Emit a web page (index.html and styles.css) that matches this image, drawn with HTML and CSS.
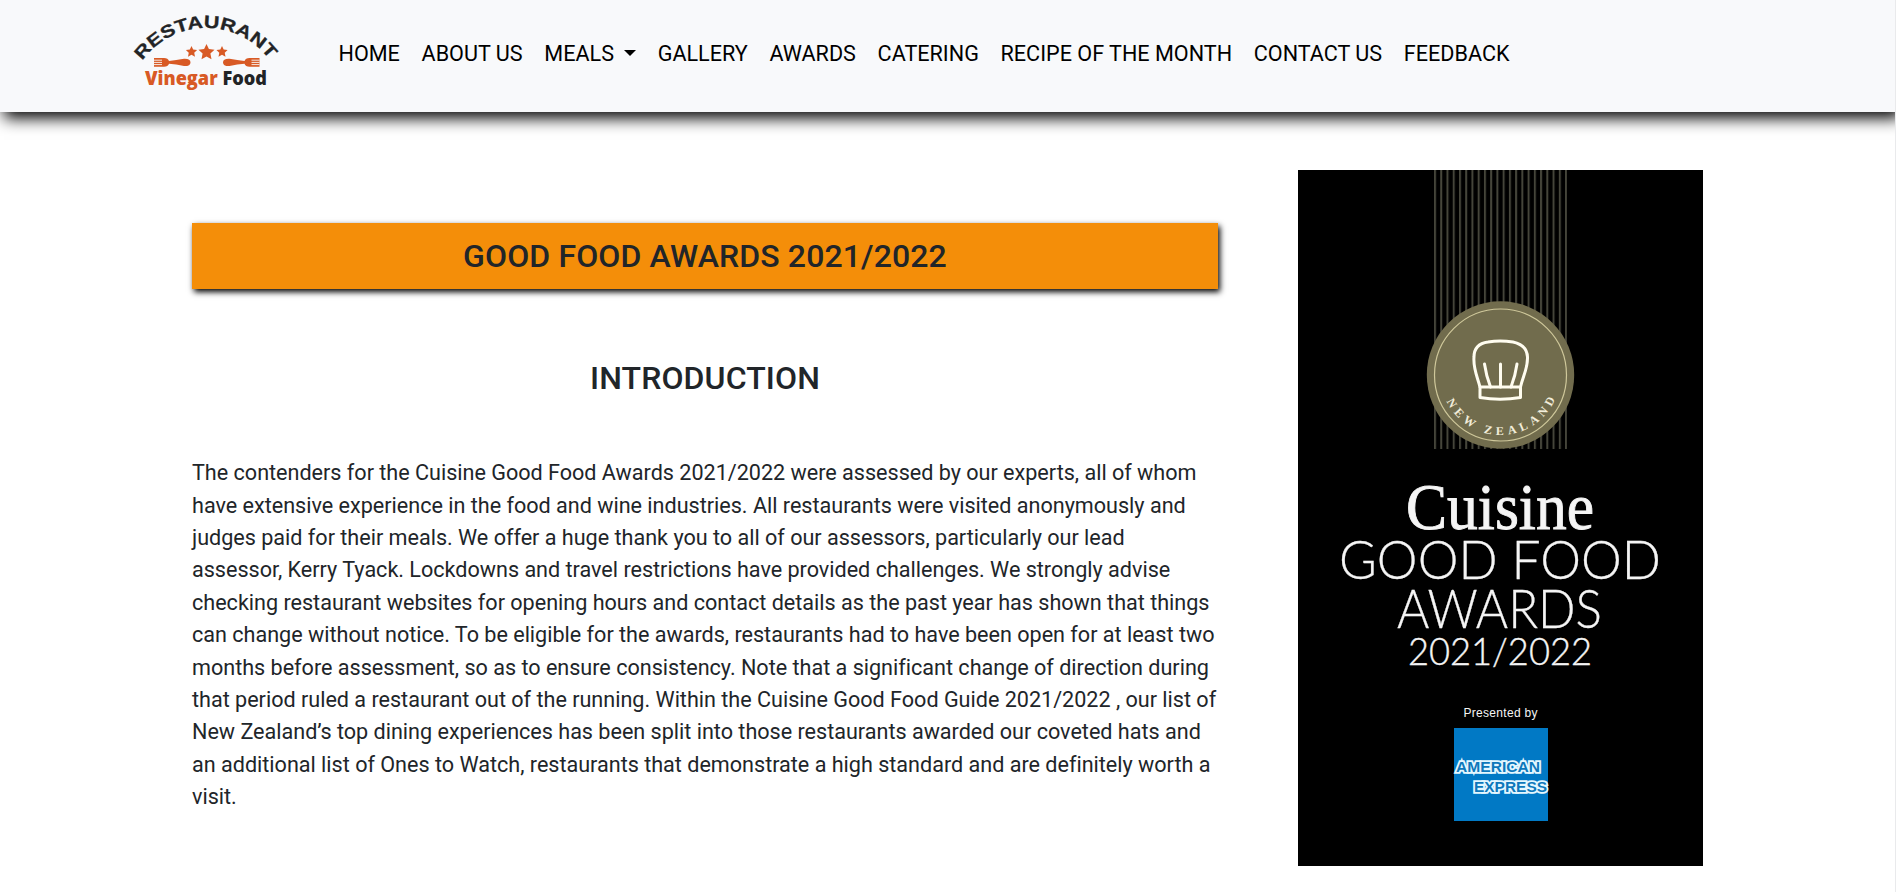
FILE: index.html
```html
<!DOCTYPE html>
<html lang="en">
<head>
<meta charset="utf-8">
<title>Restaurant Vinegar Food - Awards</title>
<link rel="stylesheet" href="styles.css">
</head>
<body>
<header class="navbar">
  <a class="brand" href="#" aria-label="Restaurant Vinegar Food">
    <svg class="logo" width="152" height="90" viewBox="0 0 152 90">
      <defs>
        <path id="arch" d="M12.500 50.500A78.500 78.500 0 0 1 140.500 51.500"/>
        <path id="star" d="M0-8.200 2.400-3.200 8-2.600 3.900 1.200 5 6.900 0 4.200-5 6.900-3.900 1.200-8-2.600-2.400-3.200Z"/>
        <g id="fork">
          <path d="M0 0H10Q14 0 15 3Q22 2.400 30 .8Q36.500 .5 36.500 4.400Q36.500 8.200 30 8Q22 6.300 15 5.800Q14 8.700 10 8.700H0Z"/>
          <path class="tines" d="M0 2.200H8M0 4.400H8M0 6.600H8"/>
        </g>
      </defs>
      <text class="logo-arch"><textPath href="#arch" textLength="147" lengthAdjust="spacingAndGlyphs">RESTAURANT</textPath></text>
      <g class="logo-orange">
        <use href="#star" x="76.500" y="42.300"/>
        <use href="#star" transform="translate(61.500 41.800) scale(.7)"/>
        <use href="#star" transform="translate(92 41.800) scale(.7)"/>
        <use href="#fork" x="24" y="48"/>
        <use href="#fork" transform="translate(129.500 48) scale(-1 1)"/>
      </g>
      <text class="logo-name" x="15" y="75" textLength="122" lengthAdjust="spacingAndGlyphs"><tspan class="logo-orange">Vinegar</tspan> Food</text>
    </svg>
  </a>
  <nav class="nav">
    <a href="#">HOME</a>
    <a href="#">ABOUT US</a>
    <a href="#" class="dropdown">MEALS</a>
    <a href="#">GALLERY</a>
    <a href="#">AWARDS</a>
    <a href="#">CATERING</a>
    <a href="#">RECIPE OF THE MONTH</a>
    <a href="#">CONTACT US</a>
    <a href="#">FEEDBACK</a>
  </nav>
</header>
<main class="content">
  <article class="article">
    <h2 class="banner">GOOD FOOD AWARDS 2021/2022</h2>
    <h2 class="subtitle">INTRODUCTION</h2>
    <p class="copy">The contenders for the Cuisine Good Food Awards 2021/2022 were assessed by our experts, all of whom have extensive experience in the food and wine industries. All restaurants were visited anonymously and judges paid for their meals. We offer a huge thank you to all of our assessors, particularly our lead assessor, Kerry Tyack. Lockdowns and travel restrictions have provided challenges. We strongly advise checking restaurant websites for opening hours and contact details as the past year has shown that things can change without notice. To be eligible for the awards, restaurants had to have been open for at least two months before assessment, so as to ensure consistency. Note that a significant change of direction during that period ruled a restaurant out of the running. Within the Cuisine Good Food Guide 2021/2022 , our list of New Zealand’s top dining experiences has been split into those restaurants awarded our coveted hats and an additional list of Ones to Watch, restaurants that demonstrate a high standard and are definitely worth a visit.</p>
  </article>
  <svg class="poster" width="405" height="696" viewBox="0 0 405 696">
    <defs>
      <pattern id="stripes" x="136" y="0" width="6.240" height="280" patternUnits="userSpaceOnUse"><rect width="2" height="280" fill="#45453a"/></pattern>
      <path id="ring" d="M142.500 205A60 60 0 0 0 262.500 205"/>
    </defs>
    <rect width="405" height="696" fill="#000"/>
    <rect x="136" y="0" width="133" height="279" fill="url(#stripes)"/>
    <circle cx="202.500" cy="205" r="73.700" fill="#716c4d"/>
    <circle cx="202.500" cy="205" r="66" fill="none" stroke="#cfc89b" stroke-width="1.200"/>
    <g class="hat">
      <path d="M182 217C179 206 175 198 176 187Q176 174 190 172Q202 170 215 172Q229 175 229.500 187C230 198 225 206 222.500 217Z"/>
      <path d="M182 217V227.500Q202 231 222.500 227.500V217M186.500 194Q188 205 192.500 217M202.500 194V217M219 194Q217.500 205 213 217"/>
    </g>
    <text class="seal"><textPath href="#ring" startOffset="27" textLength="136" lengthAdjust="spacing">NEW ZEALAND</textPath></text>
    <g class="poster-text">
      <text class="cuisine" x="108" y="359" textLength="188" lengthAdjust="spacingAndGlyphs">Cuisine</text>
      <text class="thin" x="41" y="409" textLength="322" lengthAdjust="spacingAndGlyphs">GOOD FOOD</text>
      <text class="thin" x="99" y="457.500" textLength="205" lengthAdjust="spacingAndGlyphs">AWARDS</text>
      <text class="year" x="110" y="495" textLength="184" lengthAdjust="spacingAndGlyphs">2021/2022</text>
      <text class="presented" x="165.500" y="547" textLength="74">Presented by</text>
    </g>
    <rect x="156" y="558" width="94" height="93" fill="#0179c5"/>
    <text class="amex" x="158" y="601.500" textLength="84" lengthAdjust="spacingAndGlyphs">AMERICAN</text>
    <text class="amex" x="176" y="621.500" textLength="73" lengthAdjust="spacingAndGlyphs">EXPRESS</text>
  </svg>
</main>
</body>
</html>
```
FILE: styles.css
```css
* { box-sizing: border-box; }
body { margin: 0; height: 892px; overflow: hidden; background: #fff; color: #212529; font-family: Roboto, sans-serif; font-size: 21.600px; line-height: 1.500; border-right: 1px solid #e9eaec; }
.navbar { display: flex; align-items: flex-start; height: 112px; padding-left: 130px; background: #f8f9fb; box-shadow: 5px 5px 15px 1px #000; }
.brand { display: block; width: 150px; height: 90px; margin-top: 10px; }
.logo { display: block; overflow: visible; }
.logo-arch { font: 700 17.500px "Liberation Sans", sans-serif; fill: #222426; stroke: #222426; stroke-width: .3; }
.logo-name { font: 800 18.700px "Open Sans", sans-serif; fill: #222426; }
.logo-orange { fill: #d85a25; }
.tines { fill: none; stroke: #f8f9fb; stroke-width: .9; }
.nav { display: flex; gap: 5.700px; margin: 38px 0 0 50.500px; }
.nav a { padding: 0 8px; color: #000; text-decoration: none; white-space: nowrap; }
.dropdown::after { content: ""; display: inline-block; margin-left: 10px; vertical-align: 5px; border: 6px solid transparent; border-top-color: #000; border-bottom: 0; }
.content { display: flex; align-items: flex-start; padding-left: 192px; }
.article { width: 1026px; margin-top: 111px; }
.banner, .subtitle { margin: 0; font-size: 32px; font-weight: 500; line-height: 38px; letter-spacing: .12px; text-align: center; }
.banner { height: 66px; padding: 14px 0; background: #f48e09; box-shadow: 2px 3px 6px #000; }
.subtitle { margin-top: 70px; }
.copy { margin: 60.300px 0 0; letter-spacing: -.012px; }
.poster { display: block; margin: 58px 0 0 80px; }
.hat { fill: none; stroke: #fffdf0; stroke-width: 3; stroke-linecap: round; stroke-linejoin: round; }
.seal { font: 700 12px "Liberation Serif", serif; fill: #f1edda; }
.poster-text { fill: #f5f5f5; }
.cuisine { font: 65px "Liberation Serif", serif; stroke: #f5f5f5; stroke-width: .9; }
.thin { font: 300 54px Lato, sans-serif; stroke: #f5f5f5; stroke-width: .3; }
.year { font: 300 38px Lato, sans-serif; stroke: #f5f5f5; stroke-width: .4; }
.presented { font: 12px "Liberation Sans", sans-serif; }
.amex { font: 700 14.500px "Liberation Sans", sans-serif; fill: #0d78bb; stroke: #e4f7ff; stroke-width: 3.600; paint-order: stroke; }
```
